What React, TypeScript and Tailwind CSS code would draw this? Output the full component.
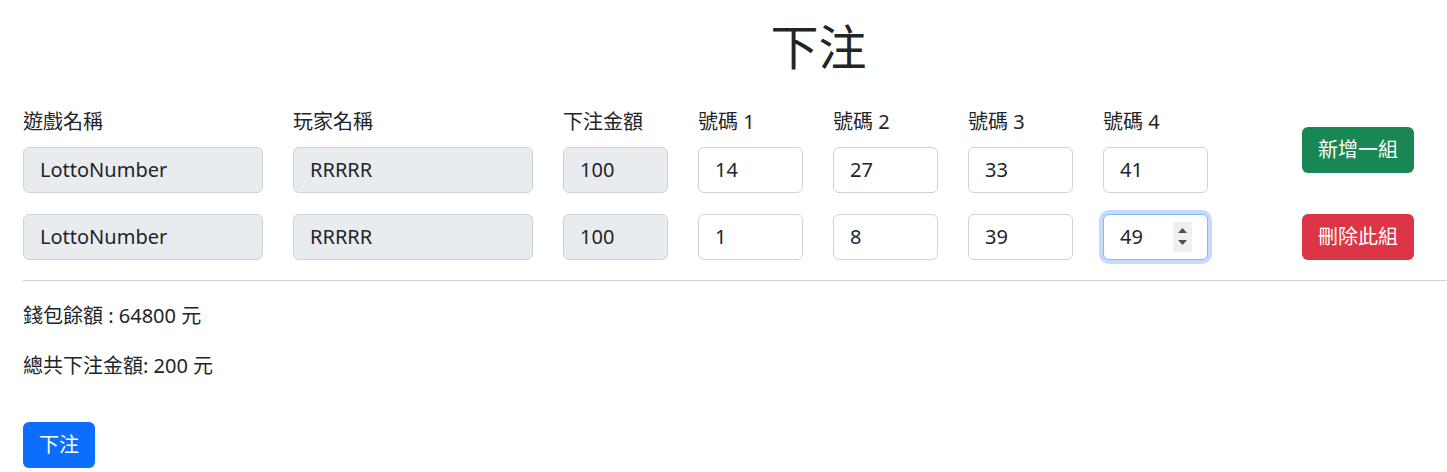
import React, { useState } from 'react';

type Row = { game: string; player: string; amount: number; nums: string[] };

const font = { fontFamily: '"Noto Sans", "Noto Sans CJK TC", sans-serif' };

const Spinner = () => (
  <span className="flex shrink-0 flex-col items-center justify-center w-[19px] h-[30px] bg-[#f0f0f0] gap-[7px]">
    <svg width="9" height="5" viewBox="0 0 9 5"><path d="M4.5 0 L9 5 L0 5 Z" fill="#505050" /></svg>
    <svg width="9" height="5" viewBox="0 0 9 5"><path d="M0 0 L9 0 L4.5 5 Z" fill="#505050" /></svg>
  </span>
);

const App = () => {
  const [rows, setRows] = useState<Row[]>([
    { game: 'LottoNumber', player: 'RRRRR', amount: 100, nums: ['14', '27', '33', '41'] },
    { game: 'LottoNumber', player: 'RRRRR', amount: 100, nums: ['1', '8', '39', '49'] },
  ]);

  const setNum = (r: number, i: number, v: string) => {
    setRows(prev => prev.map((row, ri) => ri === r ? { ...row, nums: row.nums.map((n, ni) => ni === i ? v : n) } : row));
  };

  const total = rows.reduce((s, r) => s + r.amount, 0);

  const labelCls = "h-[30px] leading-[30px] text-[20px] mb-[10px] whitespace-nowrap";
  const readCls = "h-[46px] rounded-md border border-[#ced4da] bg-[#e9ecef] px-4 text-[20px] text-[#212529] outline-none";
  const numCls = "w-[105px] h-[46px] rounded-md border border-[#ced4da] bg-white px-4 text-[20px] text-[#212529] outline-none";

  return (
    <div className="min-h-screen bg-white text-[#212529]" style={font}>
      {/* title */}
      <h1 className="pl-[190px] pt-[18px] text-center text-[48px] leading-[1.2] font-normal">下注</h1>

      <div className="pl-[23px] mt-[31px]">
        {rows.map((row, r) => (
          <div key={r} className={`flex items-center gap-[30px] ${r > 0 ? 'mt-[21px]' : ''}`}>
            <div className="flex flex-col">
              {r === 0 && <label className={labelCls}>遊戲名稱</label>}
              <input readOnly value={row.game} className={`${readCls} w-[240px]`} />
            </div>
            <div className="flex flex-col">
              {r === 0 && <label className={labelCls}>玩家名稱</label>}
              <input readOnly value={row.player} className={`${readCls} w-[240px]`} />
            </div>
            <div className="flex flex-col">
              {r === 0 && <label className={labelCls}>下注金額</label>}
              <input readOnly value={row.amount} className={`${readCls} w-[105px]`} />
            </div>
            {row.nums.map((n, i) => (
              <div key={i} className="flex flex-col">
                {r === 0 && <label className={labelCls}>號碼 {i + 1}</label>}
                {r === 1 && i === 3 ? (
                  <div className="w-[105px] h-[46px] rounded-md border border-[#86b7fe] bg-white pl-4 pr-[15px] flex items-center shadow-[0_0_0_4px_rgba(13,110,253,0.25)]">
                    <input value={n} onChange={e => setNum(r, i, e.target.value)} className="w-full min-w-0 text-[20px] outline-none bg-transparent" />
                    <Spinner />
                  </div>
                ) : (
                  <input value={n} onChange={e => setNum(r, i, e.target.value)} className={numCls} />
                )}
              </div>
            ))}
            <div className="pl-[64px]">
              {r === 0 ? (
                <button className="h-[46px] px-4 rounded-md bg-[#198754] text-white text-[20px]">新增一組</button>
              ) : (
                <button className="h-[46px] px-4 rounded-md bg-[#dc3545] text-white text-[20px]">刪除此組</button>
              )}
            </div>
          </div>
        ))}

        <hr className="mt-[20px] border-t border-[#cfd0d1]" />

        <p className="mt-[20px] text-[20px] leading-[30px]">錢包餘額 : 64800 元</p>
        <p className="mt-[20px] text-[20px] leading-[30px]">總共下注金額: {total} 元</p>

        <button className="mt-[41px] h-[46px] px-4 rounded-md bg-[#0d6efd] text-white text-[20px]">下注</button>
      </div>
    </div>
  );
};

export default App;
